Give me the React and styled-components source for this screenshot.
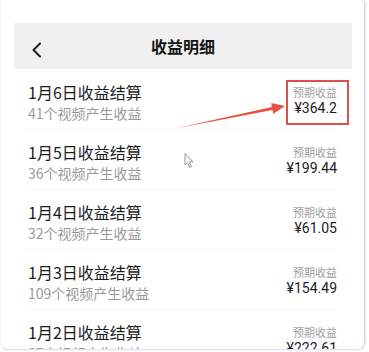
import React from "react";
import styled, {createGlobalStyle} from "styled-components";

const GlobalStyle = createGlobalStyle`
    html, body {
        margin: 0;
        padding: 0;
        background: #ffffff;
    }
    body {
        font-family: "Noto Sans CJK SC", "Noto Sans", sans-serif;
        width: 369px;
        height: 352px;
        overflow: hidden;
    }
`;

const Card = styled.div`
    position: relative;
    box-sizing: border-box;
    width: 365px;
    height: 350px;
    padding: 23px 12px 0 14px;
    background: #ffffff;
    border-right: 1px solid #d3d9e6;
    border-bottom: 1px solid #dde2ec;
    border-left: 1px solid #f1f3f7;
    border-radius: 0 4px 8px 8px;
    box-shadow: 1px 0 2px rgba(170, 180, 205, 0.35);
    overflow: hidden;
`;

const Header = styled.div`
    position: relative;
    display: flex;
    align-items: center;
    justify-content: center;
    height: 46px;
    background: #f0f0f0;
    margin-left: -1px;
`;

const BackButton = styled.span`
    position: absolute;
    left: 17px;
    top: 19px;
    display: flex;
`;

const Title = styled.div`
    font-size: 16px;
    font-weight: 700;
    color: #151515;
    line-height: 20px;
    margin-top: -1px;
`;

const List = styled.div`
    padding: 1px 15px 0 13px;
`;

const Row = styled.div`
    box-sizing: border-box;
    display: flex;
    justify-content: space-between;
    align-items: flex-start;
    height: 60px;
    padding-top: 12px;
    border-bottom: 1px solid #f3f3f3;
`;

const Info = styled.div`
    display: flex;
    flex-direction: column;
`;

const RowTitle = styled.div`
    font-size: 16px;
    line-height: 20px;
    color: #1c1c1c;
`;

const RowSub = styled.div`
    font-size: 14px;
    line-height: 20px;
    margin-top: 1px;
    color: #9a9a9a;
`;

const Amount = styled.div`
    display: flex;
    flex-direction: column;
    align-items: flex-end;
    padding-top: 3px;
`;

const AmountLabel = styled.div`
    font-size: 11px;
    line-height: 14px;
    color: #a0a0a0;
`;

const AmountValue = styled.div`
    font-size: 14px;
    line-height: 18px;
    color: #1c1c1c;
    font-family: "Roboto", "Noto Sans CJK SC", sans-serif;
`;

const Highlight = styled.div`
    position: absolute;
    left: 285px;
    top: 80px;
    width: 63px;
    height: 45px;
    box-sizing: border-box;
    border: 2px solid #d9524a;
    pointer-events: none;
`;

const Overlay = styled.svg`
    position: absolute;
    left: 0;
    top: 0;
    pointer-events: none;
`;

const rows = [
    {date: "1月6日收益结算", videos: "41个视频产生收益", amount: "¥364.2"},
    {date: "1月5日收益结算", videos: "36个视频产生收益", amount: "¥199.44"},
    {date: "1月4日收益结算", videos: "32个视频产生收益", amount: "¥61.05"},
    {date: "1月3日收益结算", videos: "109个视频产生收益", amount: "¥154.49"},
    {date: "1月2日收益结算", videos: "87个视频产生收益", amount: "¥222.61"},
];

export default function App() {
    return (
        <>
            <GlobalStyle />
            <Card>
                <Header>
                    <BackButton>
                        <svg width="12" height="16" viewBox="0 0 12 16">
                            <polyline
                                points="9,1.5 2.5,8 9,14.5"
                                fill="none"
                                stroke="#1e1e1e"
                                strokeWidth="2"
                                strokeLinecap="round"
                                strokeLinejoin="round"
                            />
                        </svg>
                    </BackButton>
                    <Title>收益明细</Title>
                </Header>
                <List>
                    {rows.map((row) => (
                        <Row key={row.date}>
                            <Info>
                                <RowTitle>{row.date}</RowTitle>
                                <RowSub>{row.videos}</RowSub>
                            </Info>
                            <Amount>
                                <AmountLabel>预期收益</AmountLabel>
                                <AmountValue>{row.amount}</AmountValue>
                            </Amount>
                        </Row>
                    ))}
                </List>
                <Highlight />
                {/* annotation arrow + mouse pointer from the screen capture */}
                <Overlay width="365" height="350" viewBox="0 0 365 350">
                    <polygon
                        points="174,128.5 270.9,107 270.2,103.1 284,106 272.2,113.9 271.5,110"
                        fill="#e5533f"
                    />
                    <path
                        d="M184 153.5 L184 165 L186.6 162.6 L188.6 167.4 L190.4 166.6 L188.4 161.9 L192 161.9 Z"
                        fill="#ffffff"
                        stroke="#8a8a8a"
                        strokeWidth="0.9"
                        strokeLinejoin="round"
                    />
                </Overlay>
            </Card>
        </>
    );
}
